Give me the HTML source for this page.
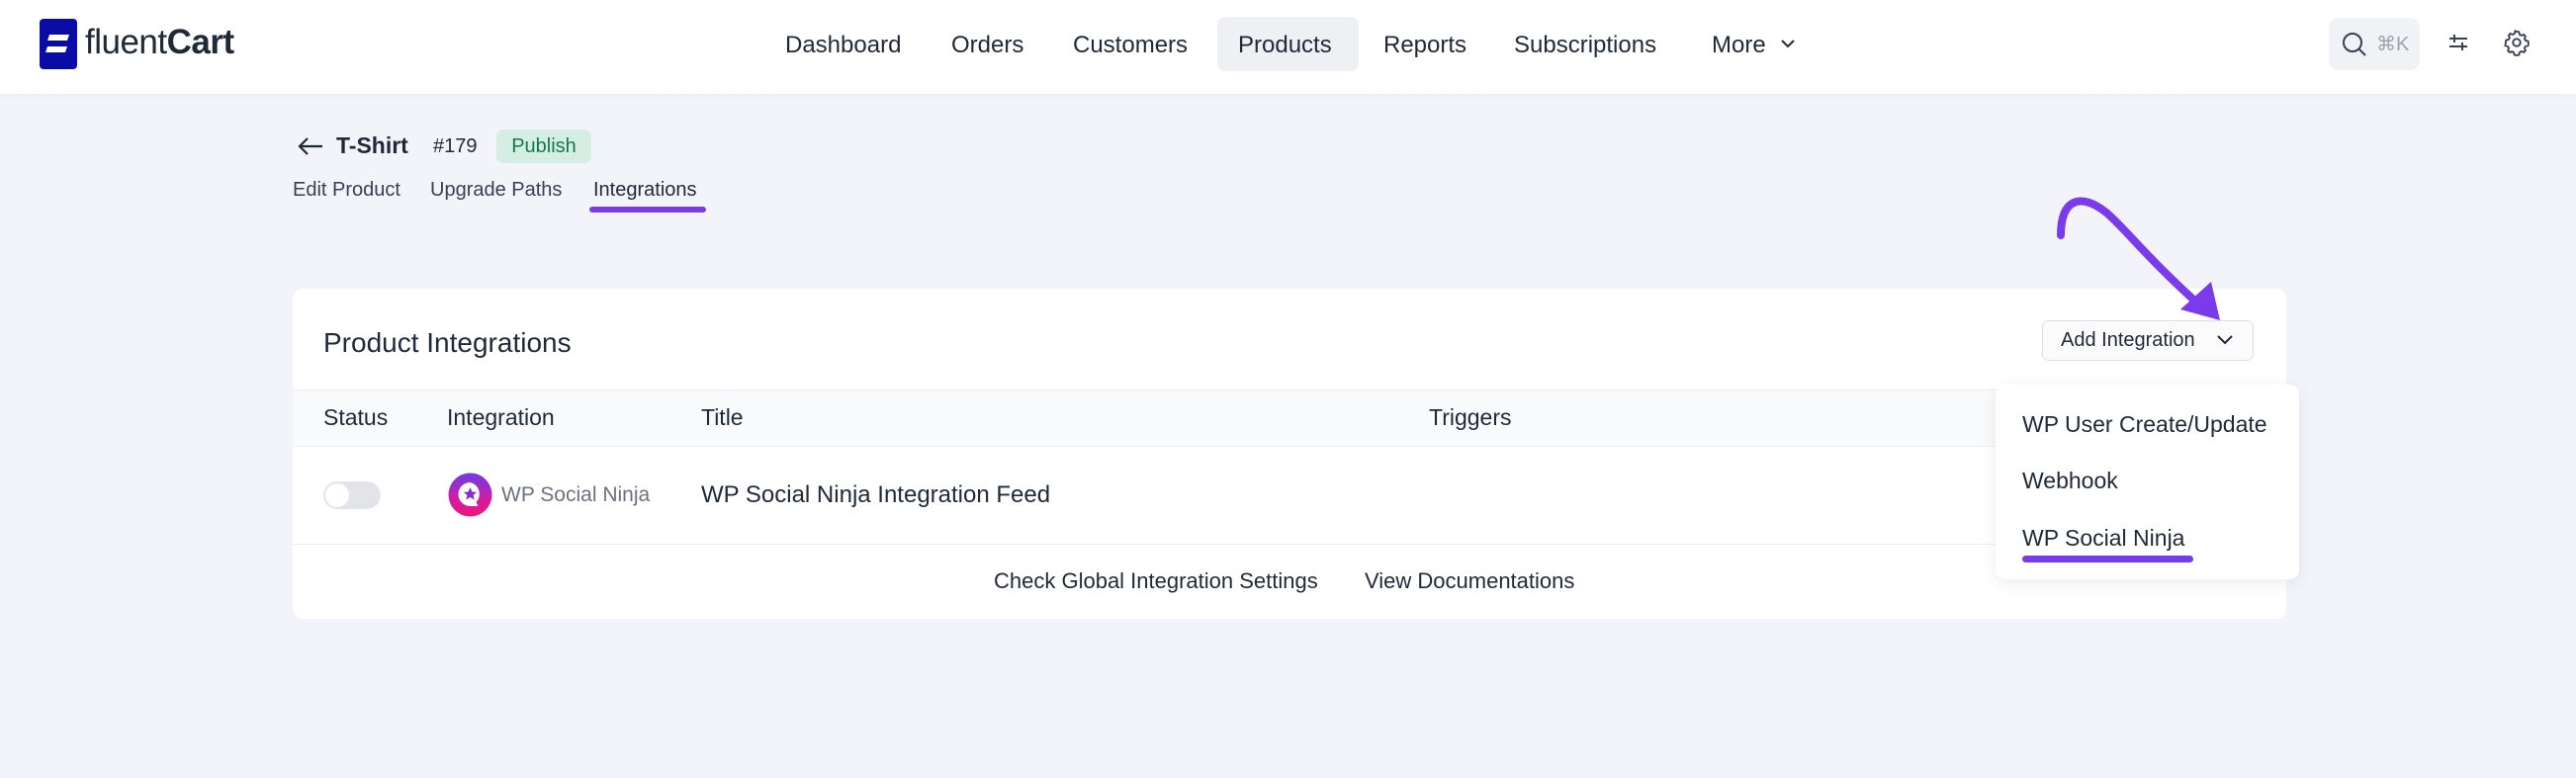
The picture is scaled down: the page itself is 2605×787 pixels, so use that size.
<!DOCTYPE html>
<html><head><meta charset="utf-8"><style>
*{box-sizing:border-box;margin:0;padding:0}
body{width:2605px;height:787px;background:#f3f4fa;font-family:"Liberation Sans",sans-serif;color:#1f2937;position:relative;overflow:hidden}
.a{position:absolute;white-space:nowrap}
.hdr{position:absolute;left:0;top:0;width:2605px;height:95px;background:#fff;box-shadow:0 2px 6px rgba(0,0,0,.04)}
.nav{font-size:24px;top:32px;color:#1f2937}
.card{position:absolute;left:296px;top:292px;width:2016px;height:334px;background:#fff;border-radius:10px}
.th{font-size:23px;top:409px;color:#1f2937}
</style></head><body>
<div class="hdr"></div>
<div class="a" style="left:40px;top:19px;width:38px;height:51px;background:#0b0ba8;border-radius:4px"></div>
<svg class="a" style="left:40px;top:19px" width="38" height="51" viewBox="0 0 38 51"><path d="M10 16 L30 16 L28 22 L8 22Z M8 28 L28 28 L26 34 L6 34Z" fill="#fff"/></svg>
<div class="a" style="left:86px;top:23px;font-size:35px;color:#1f2937;letter-spacing:-0.5px">fluent<b style="font-weight:700">Cart</b></div>
<div class="a" style="left:1231px;top:17px;width:143px;height:55px;background:#eff0f3;border-radius:8px"></div>
<div class="a nav" style="left:794px">Dashboard</div>
<div class="a nav" style="left:962px">Orders</div>
<div class="a nav" style="left:1085px">Customers</div>
<div class="a nav" style="left:1252px">Products</div>
<div class="a nav" style="left:1399px">Reports</div>
<div class="a nav" style="left:1531px">Subscriptions</div>
<div class="a nav" style="left:1731px">More</div>
<svg class="a" style="left:1800px;top:38px" width="16" height="12"><path d="M2 3l6 6 6-6" stroke="#1f2937" stroke-width="2" fill="none"/></svg>
<div class="a" style="left:2355px;top:18px;width:92px;height:53px;background:#f1f2f5;border-radius:10px"></div>
<svg class="a" style="left:2366px;top:30px" width="30" height="30"><circle cx="13" cy="13" r="9" stroke="#374151" stroke-width="2" fill="none"/><path d="M20 20l6 6" stroke="#374151" stroke-width="2"/></svg>
<div class="a" style="left:2403px;top:32px;font-size:20px;color:#9ca3af">⌘K</div>
<svg class="a" style="left:2474px;top:31px" width="24" height="24"><path d="M3 8h18M3 16h18M8 4v8M16 12v8" stroke="#374151" stroke-width="2"/></svg>
<svg class="a" style="left:2531px;top:29px" width="28" height="28" viewBox="0 0 24 24"><path d="M12 2.5l2 .3.5 2.2 1.6.9 2.1-.8 1.4 1.5-.8 2.1.9 1.6 2.2.5.3 2-.3 2-2.2.5-.9 1.6.8 2.1-1.4 1.5-2.1-.8-1.6.9-.5 2.2-2 .3-2-.3-.5-2.2-1.6-.9-2.1.8-1.4-1.5.8-2.1-.9-1.6-2.2-.5L2.5 12l.3-2 2.2-.5.9-1.6-.8-2.1L6.5 4.3l2.1.8 1.6-.9.5-2.2z" stroke="#374151" stroke-width="1.6" fill="none"/><circle cx="12" cy="12" r="3.2" stroke="#374151" stroke-width="1.6" fill="none"/></svg>

<svg class="a" style="left:300px;top:137px" width="28" height="22"><path d="M26 11H3M11 3l-8 8 8 8" stroke="#1f2937" stroke-width="2.2" fill="none"/></svg>
<div class="a" style="left:340px;top:134px;font-size:23px;font-weight:700">T-Shirt</div>
<div class="a" style="left:438px;top:137px;font-size:20px">#179</div>
<div class="a" style="left:502px;top:131px;width:96px;height:34px;background:#d5ede3;border-radius:7px;color:#137a4b;font-size:20px;text-align:center;line-height:34px">Publish</div>
<div class="a" style="left:296px;top:181px;font-size:20px;color:#374151">Edit Product</div>
<div class="a" style="left:435px;top:181px;font-size:20px;color:#374151">Upgrade Paths</div>
<div class="a" style="left:600px;top:181px;font-size:20px;color:#1f2937">Integrations</div>
<div class="a" style="left:596px;top:209px;width:118px;height:6px;background:#7c3aed;border-radius:3px"></div>

<div class="card"></div>
<div class="a" style="left:327px;top:331px;font-size:28px">Product Integrations</div>
<div class="a" style="left:296px;top:394px;width:2016px;height:58px;background:#f9fafc;border-top:1px solid #eceef2;border-bottom:1px solid #eceef2"></div>
<div class="a th" style="left:327px">Status</div>
<div class="a th" style="left:452px">Integration</div>
<div class="a th" style="left:709px">Title</div>
<div class="a th" style="left:1445px">Triggers</div>
<div class="a" style="left:296px;top:550px;width:2016px;height:1px;background:#eceef2"></div>
<div class="a" style="left:327px;top:487px;width:58px;height:28px;background:#e2e4ea;border-radius:14px"></div>
<div class="a" style="left:329px;top:489px;width:24px;height:24px;background:#fff;border-radius:12px"></div>
<svg class="a" style="left:453px;top:478px" width="45" height="45"><defs><linearGradient id="g" x1="0" y1="0" x2="0" y2="1"><stop offset="0" stop-color="#6d3be6"/><stop offset=".6" stop-color="#d21ca3"/><stop offset="1" stop-color="#f0167a"/></linearGradient></defs><circle cx="22.5" cy="22.5" r="22" fill="url(#g)"/><path d="M22.5 10a12 12 0 1 0 0 24h8l-2-4a12 12 0 0 0-6-20z" fill="#fff"/><path d="M22.5 15l2 4.5 4.7.4-3.6 3 1.1 4.6-4.2-2.5-4.2 2.5 1.1-4.6-3.6-3 4.7-.4z" fill="#8b2ad0"/></svg>
<div class="a" style="left:507px;top:489px;font-size:21px;color:#6b7280">WP Social Ninja</div>
<div class="a" style="left:709px;top:487px;font-size:24px">WP Social Ninja Integration Feed</div>
<div class="a" style="left:1005px;top:575px;font-size:22px">Check Global Integration Settings</div>
<div class="a" style="left:1380px;top:575px;font-size:22px">View Documentations</div>

<div class="a" style="left:2065px;top:324px;width:214px;height:41px;border:1px solid #dcdfe5;border-radius:7px;background:#fbfbfc"></div>
<div class="a" style="left:2084px;top:333px;font-size:20px">Add Integration</div>
<svg class="a" style="left:2241px;top:338px" width="18" height="12"><path d="M2 2l7 7 7-7" stroke="#1f2937" stroke-width="2" fill="none"/></svg>

<div class="a" style="left:2018px;top:389px;width:307px;height:197px;background:#fff;border-radius:10px;box-shadow:0 4px 18px rgba(0,0,0,.08)"></div>
<div class="a" style="left:2045px;top:416px;font-size:23px">WP User Create/Update</div>
<div class="a" style="left:2045px;top:473px;font-size:23px">Webhook</div>
<div class="a" style="left:2045px;top:531px;font-size:23px">WP Social Ninja</div>
<div class="a" style="left:2045px;top:562px;width:173px;height:7px;background:#7c3aed;border-radius:4px"></div>

<svg class="a" style="left:2070px;top:190px" width="190" height="140"><path d="M14 48C14 10 35 5 60 25 C80 42 100 70 158 122" stroke="#7c3aed" stroke-width="8" fill="none" stroke-linecap="round"/><path d="M135 123 L175 134 L166 95 Z" fill="#7c3aed"/></svg>
</body></html>
